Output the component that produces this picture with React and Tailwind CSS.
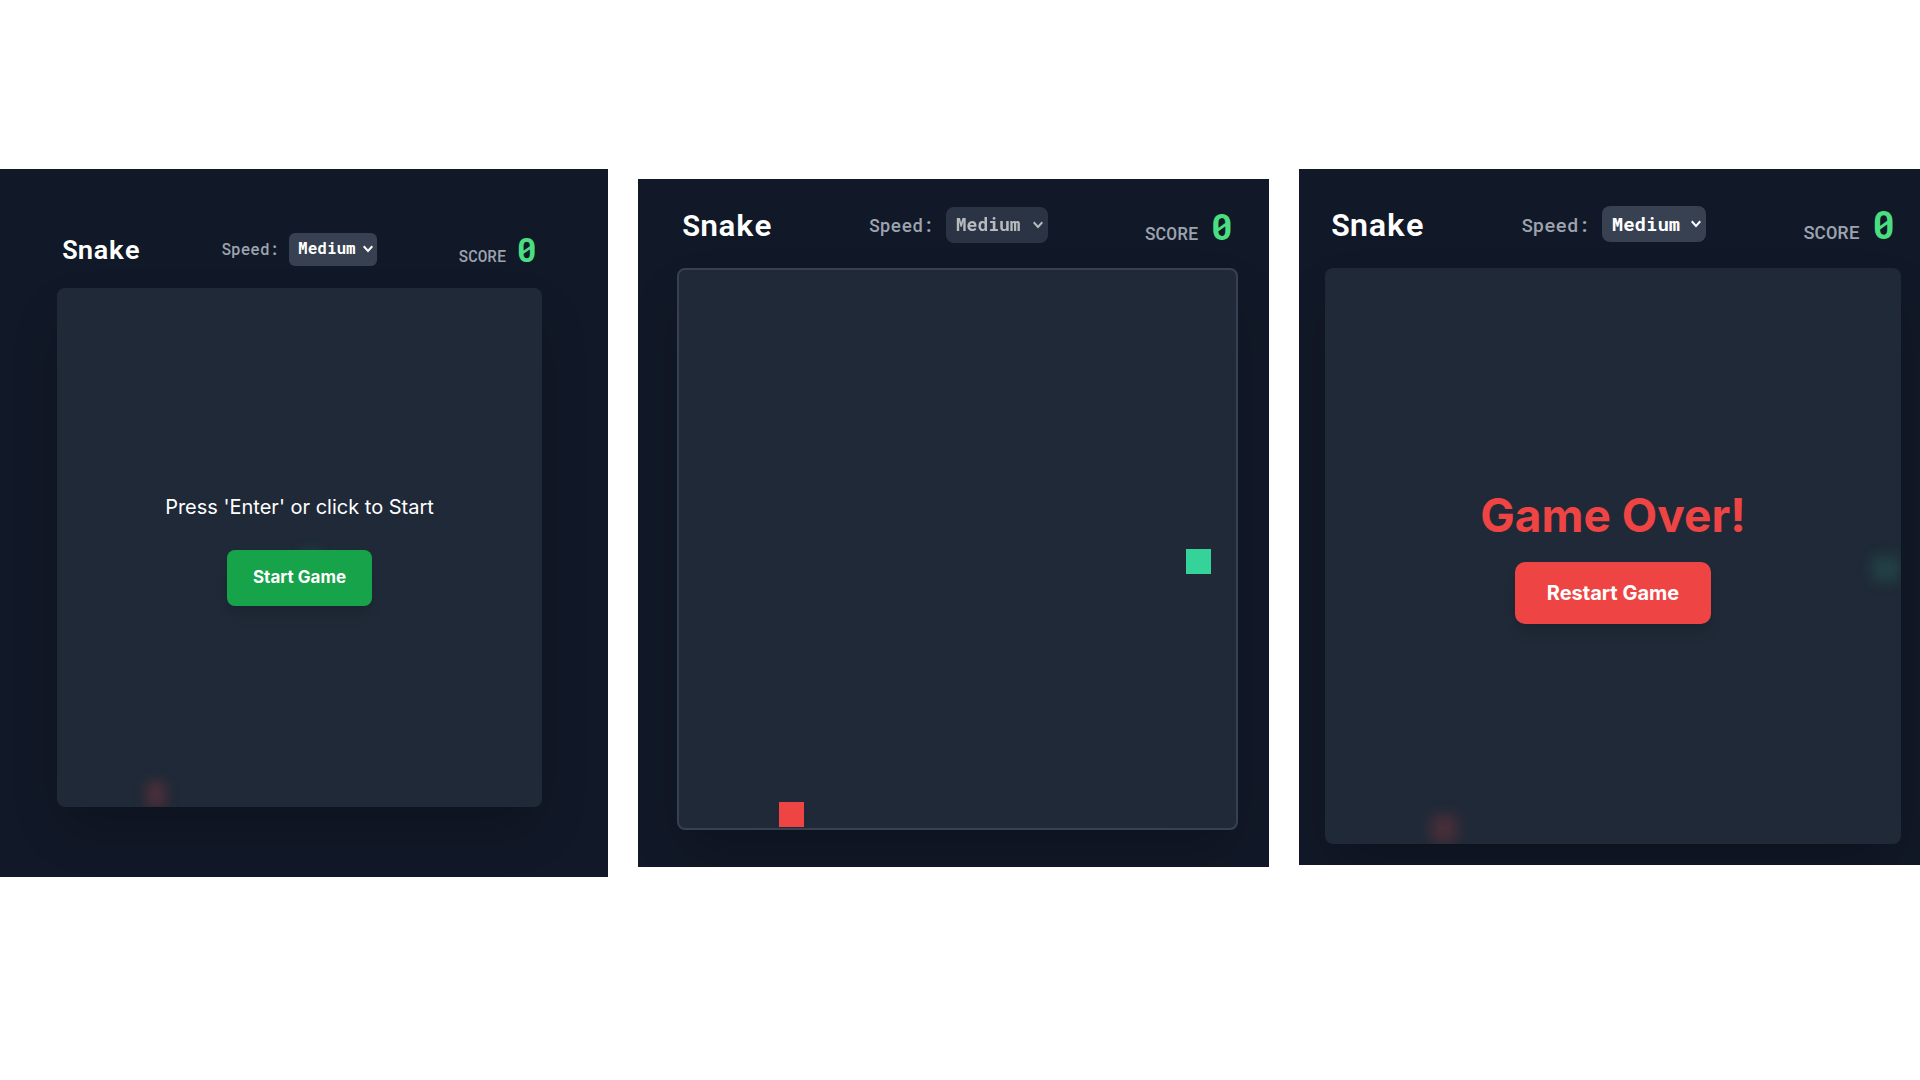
import React, { useId } from "react";

const mono = "font-['Roboto_Mono','DejaVu_Sans_Mono',monospace]";

const sizes = {
  small: {
    header: "h-8 px-[5px] mb-[23px]",
    title: "text-[26px]",
    label: "text-[16px]",
    select: "h-[33px] w-[88px] pl-[9px] text-[16px] rounded-md",
    chevron: "right-1",
    score: "text-[34px]",
    gap: "gap-2.5",
  },
  medium: {
    header: "h-9 px-[5px] mb-[25px]",
    title: "text-[30px]",
    label: "text-[18px]",
    select: "h-[36px] w-[102px] pl-[10px] text-[18px] rounded-lg",
    chevron: "right-[5px]",
    score: "text-[37px]",
    gap: "gap-3",
  },
  large: {
    header: "h-9 px-[6px] mb-[26px]",
    title: "text-[31px]",
    label: "text-[19px]",
    select: "h-[36px] w-[104px] pl-[10px] text-[19px] rounded-lg",
    chevron: "right-[5px]",
    score: "text-[38px]",
    gap: "gap-3",
  },
};

function Header({ size, disabled }) {
  const id = useId();
  const s = sizes[size];
  return (
    <header className={`flex items-center justify-between leading-none ${s.header}`}>
      <h1 className={`font-bold text-white ${s.title}`}>Snake</h1>
      <div className={`flex items-center ${s.gap}`}>
        <label htmlFor={id} className={`font-medium text-[#9ca3af] ${s.label}`}>
          Speed:
        </label>
        <div className={`relative flex text-white ${disabled ? "opacity-70" : ""}`}>
          <select
            id={id}
            defaultValue="Medium"
            disabled={disabled}
            className={`appearance-none bg-[#374151] pb-0.5 font-bold opacity-100 ${s.select}`}
          >
            <option>Slow</option>
            <option>Medium</option>
            <option>Fast</option>
          </select>
          <svg
            viewBox="0 0 10 8"
            className={`pointer-events-none absolute top-1/2 h-2 w-2.5 -translate-y-1/2 ${s.chevron}`}
            fill="none"
            stroke="currentColor"
            strokeWidth="2"
            aria-hidden="true"
          >
            <path d="M0.7 1.3 5 6l4.3-4.7" />
          </svg>
        </div>
      </div>
      <div className={`flex items-baseline ${s.gap}`}>
        <span className={`font-medium text-[#9ca3af] ${s.label}`}>SCORE</span>
        <span className={`font-bold text-[#4ade80] ${s.score}`}>0</span>
      </div>
    </header>
  );
}

function Cell({ className }) {
  return <div className={`absolute ${className}`} />;
}

export default function App() {
  return (
    <main className="grid min-h-screen grid-cols-[608fr_631fr_621fr] items-start gap-[30px] bg-white pt-[169px]">
      <section className={`overflow-hidden bg-[#111827] pt-16 pr-[66px] pb-[70px] pl-[57px] ${mono}`}>
        <Header size="small" />
        <div className="rounded-lg shadow-2xl">
          <div className="relative flex aspect-[485/519] flex-col items-center justify-center overflow-hidden rounded-lg bg-[#1f2937] pt-[3px] font-[Inter,sans-serif]">
            <Cell className="top-[50%] left-[50%] h-[25px] w-[22px] bg-[#34d399]/10 blur-[6px]" />
            <Cell className="top-[95%] left-[18%] ml-0.5 h-[27px] w-[20px] bg-[#ef4444]/20 blur-[6px]" />
            <p className="relative mb-[29px] text-[20px] leading-7 text-white">Press 'Enter' or click to Start</p>
            <button className="relative h-14 rounded-lg bg-[#16a34a] px-[26px] text-[17px] font-bold text-white shadow-lg">
              Start Game
            </button>
          </div>
        </div>
      </section>

      <section className={`mt-2.5 overflow-hidden bg-[#111827] pt-7 pr-[31px] pb-[37px] pl-[39px] ${mono}`}>
        <Header size="medium" disabled />
        <div className="relative aspect-[561/562] rounded-lg border-2 border-[#374151] bg-[#1f2937] shadow-2xl">
          <Cell className="top-[50%] left-[91%] h-[25px] w-[25px] bg-[#34d399]" />
          <Cell className="bottom-px left-[18%] h-[25px] w-[25px] bg-[#ef4444]" />
        </div>
      </section>

      <section className={`overflow-hidden bg-[#111827] pt-[37px] pr-[19px] pb-[21px] pl-[26px] ${mono}`}>
        <Header size="large" />
        <div className="rounded-lg shadow-2xl">
          <div className="relative flex aspect-square flex-col items-center justify-center overflow-hidden rounded-lg bg-[#1f2937] font-[Inter,sans-serif]">
            <Cell className="top-[50%] left-[95%] h-[25px] w-[28px] bg-[#34d399]/15 blur-[7px]" />
            <Cell className="top-[95%] left-[18%] ml-0.5 h-[28px] w-[26px] bg-[#ef4444]/20 blur-[7px]" />
            <h2 className="relative mb-5 text-[46px] leading-[54px] font-bold text-[#ef4444]">Game Over!</h2>
            <button className="relative h-[62px] rounded-[10px] bg-[#ef4444] px-8 text-[20px] font-bold text-white shadow-lg">
              Restart Game
            </button>
          </div>
        </div>
      </section>
    </main>
  );
}
